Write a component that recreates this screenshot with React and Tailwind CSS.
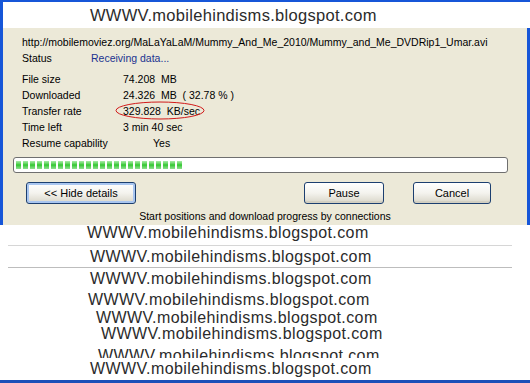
import React from "react";

// watermark text repeated over the screenshot
const MARK = "WWWV.mobilehindisms.blogspot.com";

const Watermark = ({ className = "" }) => (
  <div
    className={`whitespace-nowrap text-[16px] leading-[16px] tracking-[0.4px] text-[#2b2b2b] ${className}`}
  >
    {MARK}
  </div>
);

const InfoRow = ({ label, children, labelWidth = "w-[101px]" }) => (
  <div className="flex h-[16px] items-center leading-[16px]">
    <span className={`${labelWidth} shrink-0`}>{label}</span>
    {children}
  </div>
);

const XpButton = ({ children, focused, className = "" }) => (
  <button
    className={`h-[22px] rounded-[3px] border border-[#1c3f70] bg-linear-to-b from-white via-[#f4f3ee] to-[#d9d6c9] text-[11px] text-black ${
      focused ? "shadow-[inset_0_0_0_2px_#a9c6f0]" : "shadow-[inset_0_-2px_0_#d2cfc2]"
    } ${className}`}
  >
    {children}
  </button>
);

export default function App() {
  const blocks = Array.from({ length: 24 });

  return (
    <div
      className="flex h-[383px] w-[530px] flex-col overflow-hidden bg-white"
      style={{ fontFamily: '"Liberation Sans", Arial, sans-serif' }}
    >
      {/* top part: window with blue frame */}
      <div className="flex h-[225px] shrink-0 flex-col border-l-[3px] border-t-[2px] border-[#1656d8]">
        {/* white strip with watermark */}
        <div className="flex h-[26px] shrink-0 items-center bg-white pl-[87px]">
          <div className="whitespace-nowrap text-[16.5px] leading-[16px] tracking-[0.3px] text-[#2b2b2b]">
            {MARK}
          </div>
        </div>

        {/* dialog body */}
        <div className="flex flex-1 flex-col overflow-hidden border-r-[3px] border-[#1656d8] bg-[#ece9d8] text-[10.5px] text-black">
          <div className="pl-[19px] pt-[6px]">
            <div className="h-[16px] whitespace-nowrap leading-[16px]">
              http://mobilemoviez.org/MaLaYaLaM/Mummy_And_Me_2010/Mummy_and_Me_DVDRip1_Umar.avi
            </div>
            <InfoRow label="Status" labelWidth="w-[69px]">
              <span className="text-[#1b3390]">Receiving data...</span>
            </InfoRow>

            <div className="mt-[5px]">
              <InfoRow label="File size">
                <span className="whitespace-pre">74.208  MB</span>
              </InfoRow>
              <InfoRow label="Downloaded">
                <span className="whitespace-pre">24.326  MB  ( 32.78 % )</span>
              </InfoRow>
              <InfoRow label="Transfer rate">
                <span className="relative whitespace-pre">
                  329.828  KB/sec
                  <svg
                    className="absolute left-[-8px] top-[-2px]"
                    width="90"
                    height="19"
                    viewBox="0 0 90 19"
                  >
                    <ellipse cx="45" cy="9.5" rx="44" ry="8.5" fill="none" stroke="#d11a1a" strokeWidth="1" />
                  </svg>
                </span>
              </InfoRow>
              <InfoRow label="Time left">
                <span>3 min 40 sec</span>
              </InfoRow>
              <InfoRow label="Resume capability">
                <span className="pl-[30px]">Yes</span>
              </InfoRow>
            </div>
          </div>

          {/* progress bar */}
          <div className="ml-[10px] mt-[6px] flex h-[16px] w-[495px] items-center gap-[2px] rounded-[3px] border border-[#6f6f6f] bg-white pl-[2px]">
            {blocks.map((_, i) => (
              <div
                key={i}
                className="h-[8px] w-[5px] bg-linear-to-b from-[#a8eca8] via-[#2cc82c] to-[#8ee08e]"
              />
            ))}
          </div>

          {/* buttons */}
          <div className="mt-[9px] flex items-center">
            <XpButton focused className="ml-[23px] w-[110px]">
              &lt;&lt; Hide details
            </XpButton>
            <XpButton className="ml-[168px] w-[80px]">Pause</XpButton>
            <XpButton className="ml-[29px] w-[78px]">Cancel</XpButton>
          </div>

          <div className="mt-[5px] text-center leading-[14px]">
            Start positions and download progress by connections
          </div>
        </div>
      </div>

      {/* pasted watermark strips */}
      <div className="flex flex-1 flex-col">
        <div className="h-[20px] overflow-hidden pl-[87px]">
          <Watermark />
        </div>
        <div className="ml-[8px] h-px w-[504px] bg-[#d6d6d6]" />
        <div className="h-[21px] overflow-hidden pl-[90px] pt-[3px]">
          <Watermark />
        </div>
        <div className="ml-[8px] h-px w-[504px] bg-[#bdbdbd]" />
        <div className="h-[24px] overflow-hidden pl-[90px] pt-[3px]">
          <Watermark />
        </div>
        <div className="h-[18px] overflow-hidden pl-[88px]">
          <Watermark />
        </div>
        <div className="h-[16px] overflow-hidden pl-[96px]">
          <Watermark />
        </div>
        <div className="h-[22px] overflow-hidden pl-[101px]">
          <Watermark />
        </div>
        <div className="h-[10px] overflow-hidden pl-[98px]">
          <Watermark />
        </div>
        <div className="h-[3px]" />
        <div className="h-[19px] overflow-hidden pl-[90px]">
          <Watermark />
        </div>
      </div>

      <div className="h-[3px] shrink-0 bg-[#1d4fb8]" />
    </div>
  );
}
